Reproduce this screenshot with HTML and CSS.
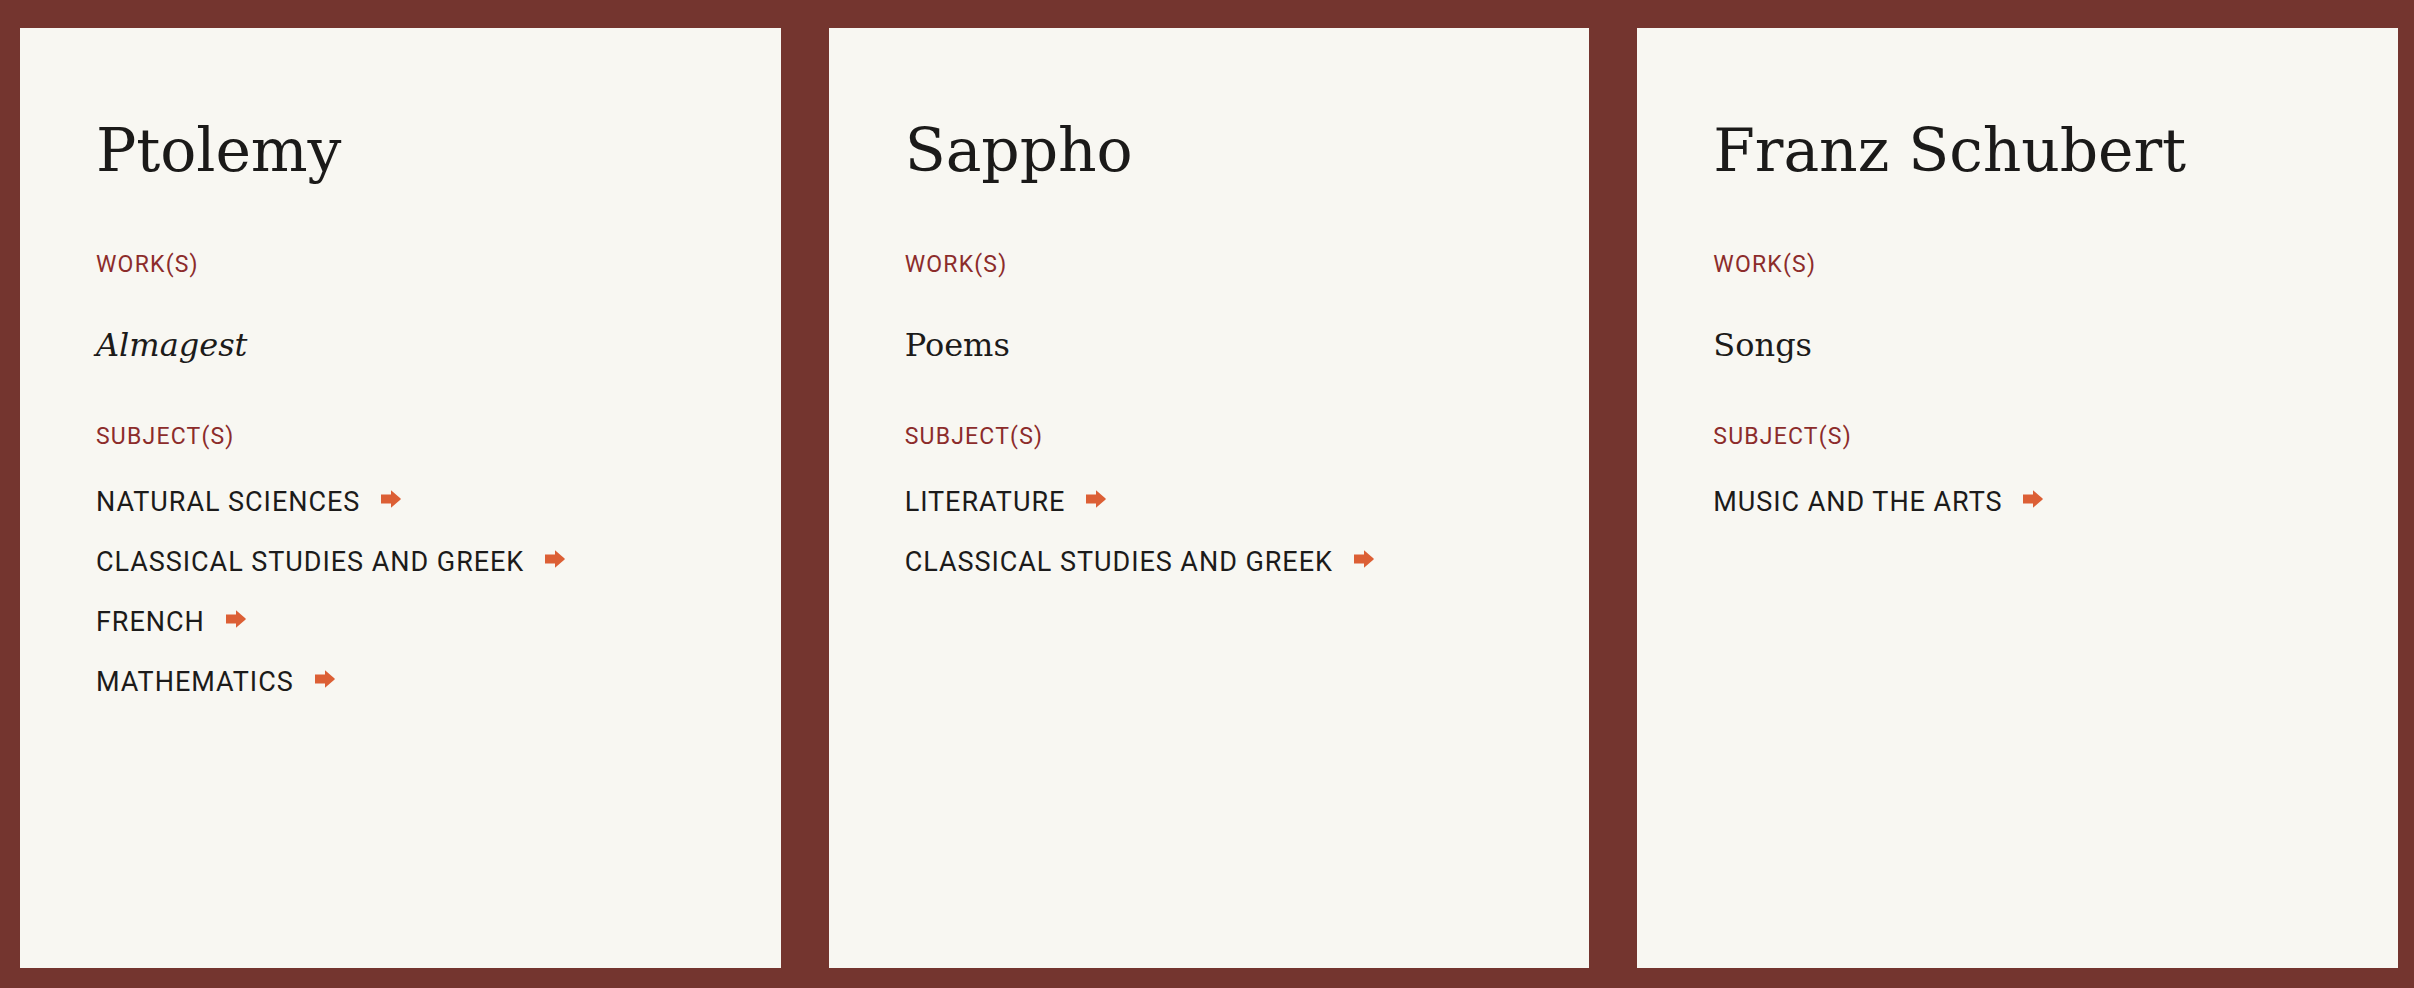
FILE: index.html
```html
<!DOCTYPE html>
<html lang="en">
<head>
<meta charset="utf-8">
<title>Figures</title>
<link rel="stylesheet" href="styles.css">
</head>
<body>
<main class="grid">
  <article class="card">
    <h2 class="name">Ptolemy</h2>
    <h3 class="label label-works">Work(s)</h3>
    <p class="work"><em>Almagest</em></p>
    <h3 class="label label-subjects">Subject(s)</h3>
    <ul class="subjects">
      <li class="subject"><a href="#">Natural Sciences</a><svg class="arrow" viewBox="0 0 20 18" aria-hidden="true"><path d="M0 4.6H10V0.3L19.6 8.6Q20 9 19.6 9.4L10 17.7V13.4H0Z"/></svg></li>
      <li class="subject"><a href="#">Classical Studies and Greek</a><svg class="arrow" viewBox="0 0 20 18" aria-hidden="true"><path d="M0 4.6H10V0.3L19.6 8.6Q20 9 19.6 9.4L10 17.7V13.4H0Z"/></svg></li>
      <li class="subject"><a href="#">French</a><svg class="arrow" viewBox="0 0 20 18" aria-hidden="true"><path d="M0 4.6H10V0.3L19.6 8.6Q20 9 19.6 9.4L10 17.7V13.4H0Z"/></svg></li>
      <li class="subject"><a href="#">Mathematics</a><svg class="arrow" viewBox="0 0 20 18" aria-hidden="true"><path d="M0 4.6H10V0.3L19.6 8.6Q20 9 19.6 9.4L10 17.7V13.4H0Z"/></svg></li>
    </ul>
  </article>
  <article class="card">
    <h2 class="name">Sappho</h2>
    <h3 class="label label-works">Work(s)</h3>
    <p class="work">Poems</p>
    <h3 class="label label-subjects">Subject(s)</h3>
    <ul class="subjects">
      <li class="subject"><a href="#">Literature</a><svg class="arrow" viewBox="0 0 20 18" aria-hidden="true"><path d="M0 4.6H10V0.3L19.6 8.6Q20 9 19.6 9.4L10 17.7V13.4H0Z"/></svg></li>
      <li class="subject"><a href="#">Classical Studies and Greek</a><svg class="arrow" viewBox="0 0 20 18" aria-hidden="true"><path d="M0 4.6H10V0.3L19.6 8.6Q20 9 19.6 9.4L10 17.7V13.4H0Z"/></svg></li>
    </ul>
  </article>
  <article class="card">
    <h2 class="name">Franz Schubert</h2>
    <h3 class="label label-works">Work(s)</h3>
    <p class="work">Songs</p>
    <h3 class="label label-subjects">Subject(s)</h3>
    <ul class="subjects">
      <li class="subject"><a href="#">Music and the Arts</a><svg class="arrow" viewBox="0 0 20 18" aria-hidden="true"><path d="M0 4.6H10V0.3L19.6 8.6Q20 9 19.6 9.4L10 17.7V13.4H0Z"/></svg></li>
    </ul>
  </article>
</main>
</body>
</html>
```

FILE: styles.css
```css
* { box-sizing: border-box; }

html, body {
  margin: 0;
  height: 988px;
}

body {
  background: #74352f;
  padding: 28px 16px 20px 20px;
}

.grid {
  display: grid;
  grid-template-columns: repeat(3, 1fr);
  gap: 48px;
  height: 100%;
}

.card {
  background: #f8f7f2;
  padding: 92px 40px 40px 76px;
  color: #1c1b1a;
}

.name {
  margin: 0;
  font-family: "DejaVu Serif", "Liberation Serif", serif;
  font-weight: 400;
  font-size: 60px;
  line-height: 60px;
  letter-spacing: -0.1px;
  color: #1b1a19;
}

.label {
  margin: 0;
  font-family: Roboto, "Liberation Sans", sans-serif;
  font-weight: 400;
  font-size: 23px;
  line-height: 23px;
  letter-spacing: 1.2px;
  text-transform: uppercase;
  color: #8c2c2b;
}

.label-works { margin-top: 73px; }
.label-subjects { margin-top: 64px; }

.work {
  margin: 53px 0 0;
  font-family: "DejaVu Serif", "Liberation Serif", serif;
  font-size: 32px;
  line-height: 32px;
  color: #1c1b1a;
}

.work em { font-style: italic; }

.subjects {
  list-style: none;
  margin: 24px 0 0;
  padding: 0;
  display: flex;
  flex-direction: column;
}

.subject {
  display: flex;
  align-items: center;
  gap: 21px;
  height: 60px;
}

.subject a {
  font-family: Roboto, "Liberation Sans", sans-serif;
  font-size: 27px;
  line-height: 60px;
  letter-spacing: 0.95px;
  text-transform: uppercase;
  color: #1c1b1a;
  text-decoration: none;
}

.arrow {
  width: 20px;
  height: 18px;
  fill: #dc5f35;
  margin-bottom: 6px;
  flex: none;
}
```
